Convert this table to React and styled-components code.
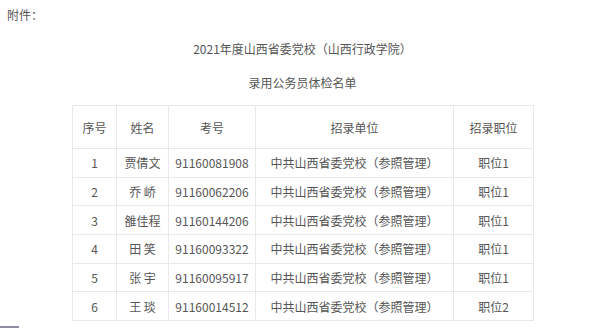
import styled, { createGlobalStyle } from "styled-components";

const GlobalStyle = createGlobalStyle`
  html, body {
    margin: 0;
    padding: 0;
    background: #fff;
  }
  body {
    font-family: "Noto Sans CJK SC", "Noto Sans", sans-serif;
    color: #555;
    font-size: 12px;
  }
`;

const Page = styled.div`
  position: relative;
  width: 600px;
  height: 329px;
  overflow: hidden;
`;

const Attach = styled.div`
  padding: 7px 0 0 7px;
  line-height: 16px;
  height: 16px;
`;

const Content = styled.div`
  width: 461px;
  margin-left: 72px;
`;

const Title = styled.div`
  text-align: center;
  line-height: 16px;
  margin-top: ${(p) => p.$top}px;
`;

const Table = styled.table`
  border-collapse: collapse;
  width: 461px;
  margin-top: 14px;
  table-layout: fixed;
`;

const Th = styled.th`
  font-weight: normal;
  height: 42px;
  padding: 0;
  border: 1px solid #e9e9e9;
  text-align: center;
`;

const Td = styled.td`
  height: 27.7px;
  padding: 0;
  border: 1px solid #e9e9e9;
  text-align: center;
`;

const BottomBar = styled.div`
  position: absolute;
  left: 0;
  bottom: 1px;
  width: 19px;
  height: 2px;
  background: #8d8da3;
`;

const cols = [44, 52, 87, 198, 80];

const rows = [
  ["1", "贾倩文", "91160081908", "中共山西省委党校（参照管理）", "职位1"],
  ["2", "乔 峤", "91160062206", "中共山西省委党校（参照管理）", "职位1"],
  ["3", "雒佳程", "91160144206", "中共山西省委党校（参照管理）", "职位1"],
  ["4", "田 笑", "91160093322", "中共山西省委党校（参照管理）", "职位1"],
  ["5", "张 宇", "91160095917", "中共山西省委党校（参照管理）", "职位1"],
  ["6", "王 琰", "91160014512", "中共山西省委党校（参照管理）", "职位2"],
];

export default function App() {
  return (
    <Page>
      <GlobalStyle />
      <Attach>附件：</Attach>
      <Content>
        <Title $top={18}>2021年度山西省委党校（山西行政学院）</Title>
        <Title $top={18}>录用公务员体检名单</Title>
        <Table>
          <colgroup>
            {cols.map((w, i) => (
              <col key={i} style={{ width: w }} />
            ))}
          </colgroup>
          <thead>
            <tr>
              <Th>序号</Th>
              <Th>姓名</Th>
              <Th>考号</Th>
              <Th>招录单位</Th>
              <Th>招录职位</Th>
            </tr>
          </thead>
          <tbody>
            {rows.map((r) => (
              <tr key={r[0]}>
                {r.map((c, i) => (
                  <Td key={i}>{c}</Td>
                ))}
              </tr>
            ))}
          </tbody>
        </Table>
      </Content>
      <BottomBar />
    </Page>
  );
}
